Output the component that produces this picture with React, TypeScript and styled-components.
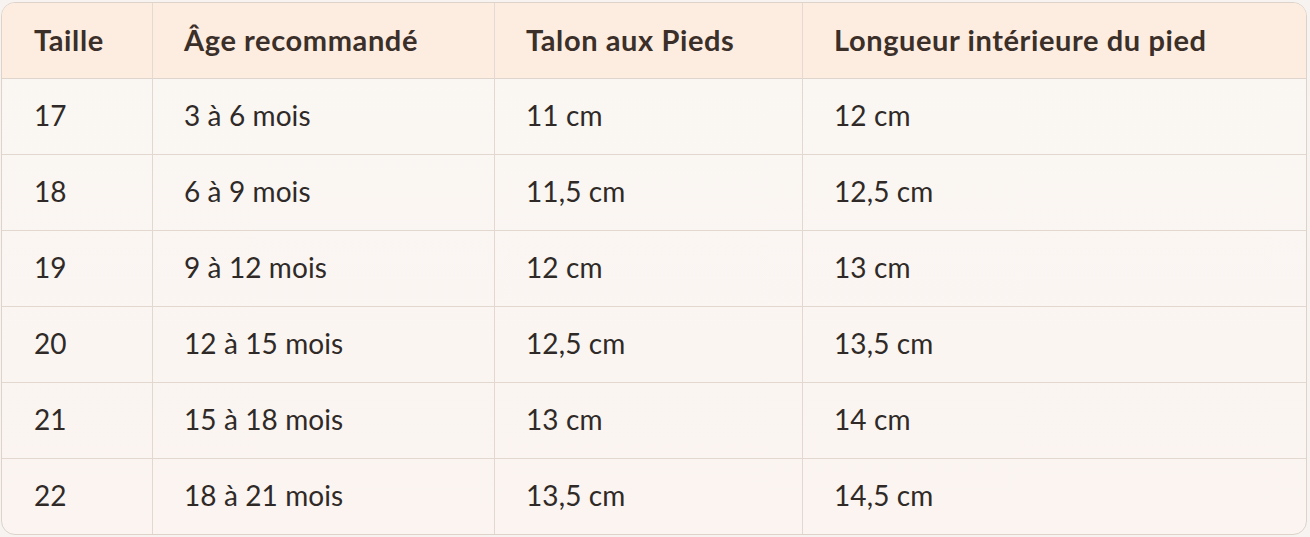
import styled, { createGlobalStyle } from "styled-components"

const GlobalStyle = createGlobalStyle`
    body {
        margin: 0;
        background: #f6f3f0;
        font-family: Lato, "Open Sans", sans-serif;
    }
`

const Wrapper = styled.div`
    padding: 2px 3px 2px 1px;
`

const Table = styled.table`
    width: 100%;
    box-sizing: border-box;
    border-collapse: separate;
    border-spacing: 0;
    border: 1px solid #ddd3cb;
    border-radius: 14px;
    overflow: hidden;
    background: linear-gradient(#faf7f3, #fbf4f1);
    table-layout: fixed;
`

const HeadCell = styled.th<{ $width?: number }>`
    box-sizing: border-box;
    width: ${p => (p.$width ? `${p.$width}px` : "auto")};
    height: 76px;
    padding: 0 0 3px 31px;
    text-align: left;
    font-size: 29px;
    letter-spacing: 0.6px;
    font-weight: 700;
    color: #3b2f29;
    background: #fdece0;
    border-bottom: 1px solid #e0d5cc;
    border-left: 1px solid #e5dad2;
    white-space: nowrap;
    &:first-child { border-left: none; padding-left: 32px; }
`

const Cell = styled.td`
    box-sizing: border-box;
    height: 76px;
    padding: 0 0 3px 31px;
    font-size: 28px;
    letter-spacing: 0.1px;
    color: #2f2a27;
    border-left: 1px solid #e2d8d0;
    border-bottom: 1px solid #e2d8d0;
    white-space: nowrap;
    &:first-child { border-left: none; padding-left: 32px; }
    tr:last-child & { border-bottom: none; height: 75px; }
`

const columns = [
    { label: "Taille", width: 150 },
    { label: "Âge recommandé", width: 342 },
    { label: "Talon aux Pieds", width: 308 },
    { label: "Longueur intérieure du pied" },
]

const rows = [
    ["17", "3 à 6 mois", "11 cm", "12 cm"],
    ["18", "6 à 9 mois", "11,5 cm", "12,5 cm"],
    ["19", "9 à 12 mois", "12 cm", "13 cm"],
    ["20", "12 à 15 mois", "12,5 cm", "13,5 cm"],
    ["21", "15 à 18 mois", "13 cm", "14 cm"],
    ["22", "18 à 21 mois", "13,5 cm", "14,5 cm"],
]

export default function App() {
    return (
        <>
            <GlobalStyle />
            <Wrapper>
                <Table>
                    <thead>
                        <tr>
                            {columns.map(c => <HeadCell key={c.label} $width={c.width}>{c.label}</HeadCell>)}
                        </tr>
                    </thead>
                    <tbody>
                        {rows.map(r => (
                            <tr key={r[0]}>
                                {r.map((v, i) => <Cell key={i}>{v}</Cell>)}
                            </tr>
                        ))}
                    </tbody>
                </Table>
            </Wrapper>
        </>
    )
}
